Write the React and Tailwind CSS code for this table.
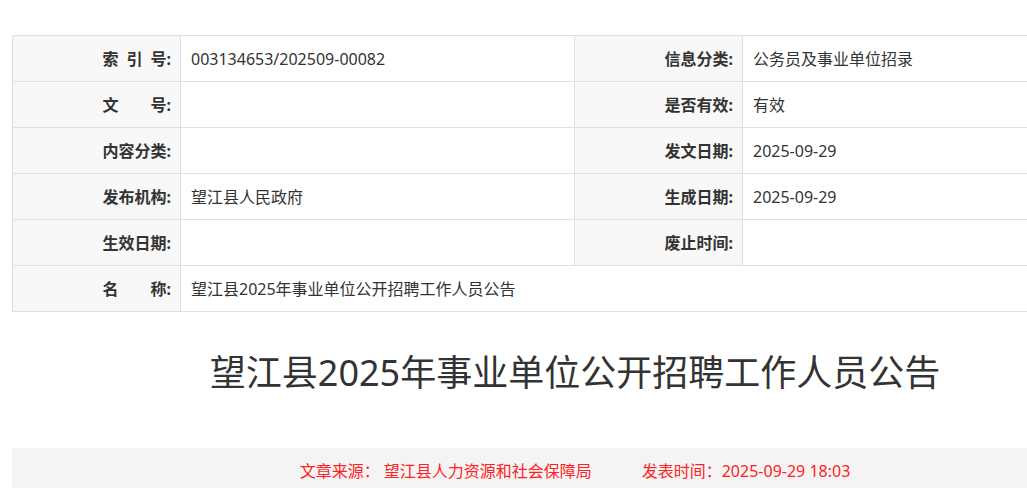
const rows = [
  [
    { label: '索\u2002引\u2002号:', value: '003134653/202509-00082' },
    { label: '信息分类:', value: '公务员及事业单位招录' },
  ],
  [
    { label: '文　　号:', value: '' },
    { label: '是否有效:', value: '有效' },
  ],
  [
    { label: '内容分类:', value: '' },
    { label: '发文日期:', value: '2025-09-29' },
  ],
  [
    { label: '发布机构:', value: '望江县人民政府' },
    { label: '生成日期:', value: '2025-09-29' },
  ],
  [
    { label: '生效日期:', value: '' },
    { label: '废止时间:', value: '' },
  ],
];

function Label({ children }) {
  return (
    <td className="h-[46px] bg-[#f8f8f8] border border-[#e0e0e0] pr-[9px] text-right font-bold text-[#333] whitespace-pre">
      {children}
    </td>
  );
}

function Value({ children, span }) {
  return (
    <td colSpan={span} className="h-[46px] border border-[#e0e0e0] pl-[10px] text-[#333]">
      {children}
    </td>
  );
}

export default function App() {
  return (
    <div
      className="w-[1027px] h-[488px] overflow-hidden bg-white pt-[35px] pl-[12px]"
      style={{ fontFamily: '"Noto Sans", "Noto Sans CJK SC", sans-serif' }}
    >
      <div className="w-[1126px]">
        <table className="w-full border-collapse table-fixed text-[16px] leading-[24px]">
          <colgroup>
            <col className="w-[168px]" />
            <col className="w-[394px]" />
            <col className="w-[168px]" />
            <col />
          </colgroup>
          <tbody>
            {rows.map((row, i) => (
              <tr key={i}>
                <Label>{row[0].label}</Label>
                <Value>{row[0].value}</Value>
                <Label>{row[1].label}</Label>
                <Value>{row[1].value}</Value>
              </tr>
            ))}
            <tr>
              <Label>名　　称:</Label>
              <Value span={3}>望江县2025年事业单位公开招聘工作人员公告</Value>
            </tr>
          </tbody>
        </table>

        <h1 className="mt-[34px] text-center text-[36px] leading-[54px] text-[#333] font-normal">
          望江县2025年事业单位公开招聘工作人员公告
        </h1>

        <div className="mt-[48px] bg-[#f4f4f4] py-[11px] flex justify-center text-[16px] leading-[24px] text-[#f22]">
          <span>文章来源：</span>
          <span className="ml-[4px]">望江县人力资源和社会保障局</span>
          <span className="ml-[50px]">发表时间：2025-09-29 18:03</span>
        </div>
      </div>
    </div>
  );
}
